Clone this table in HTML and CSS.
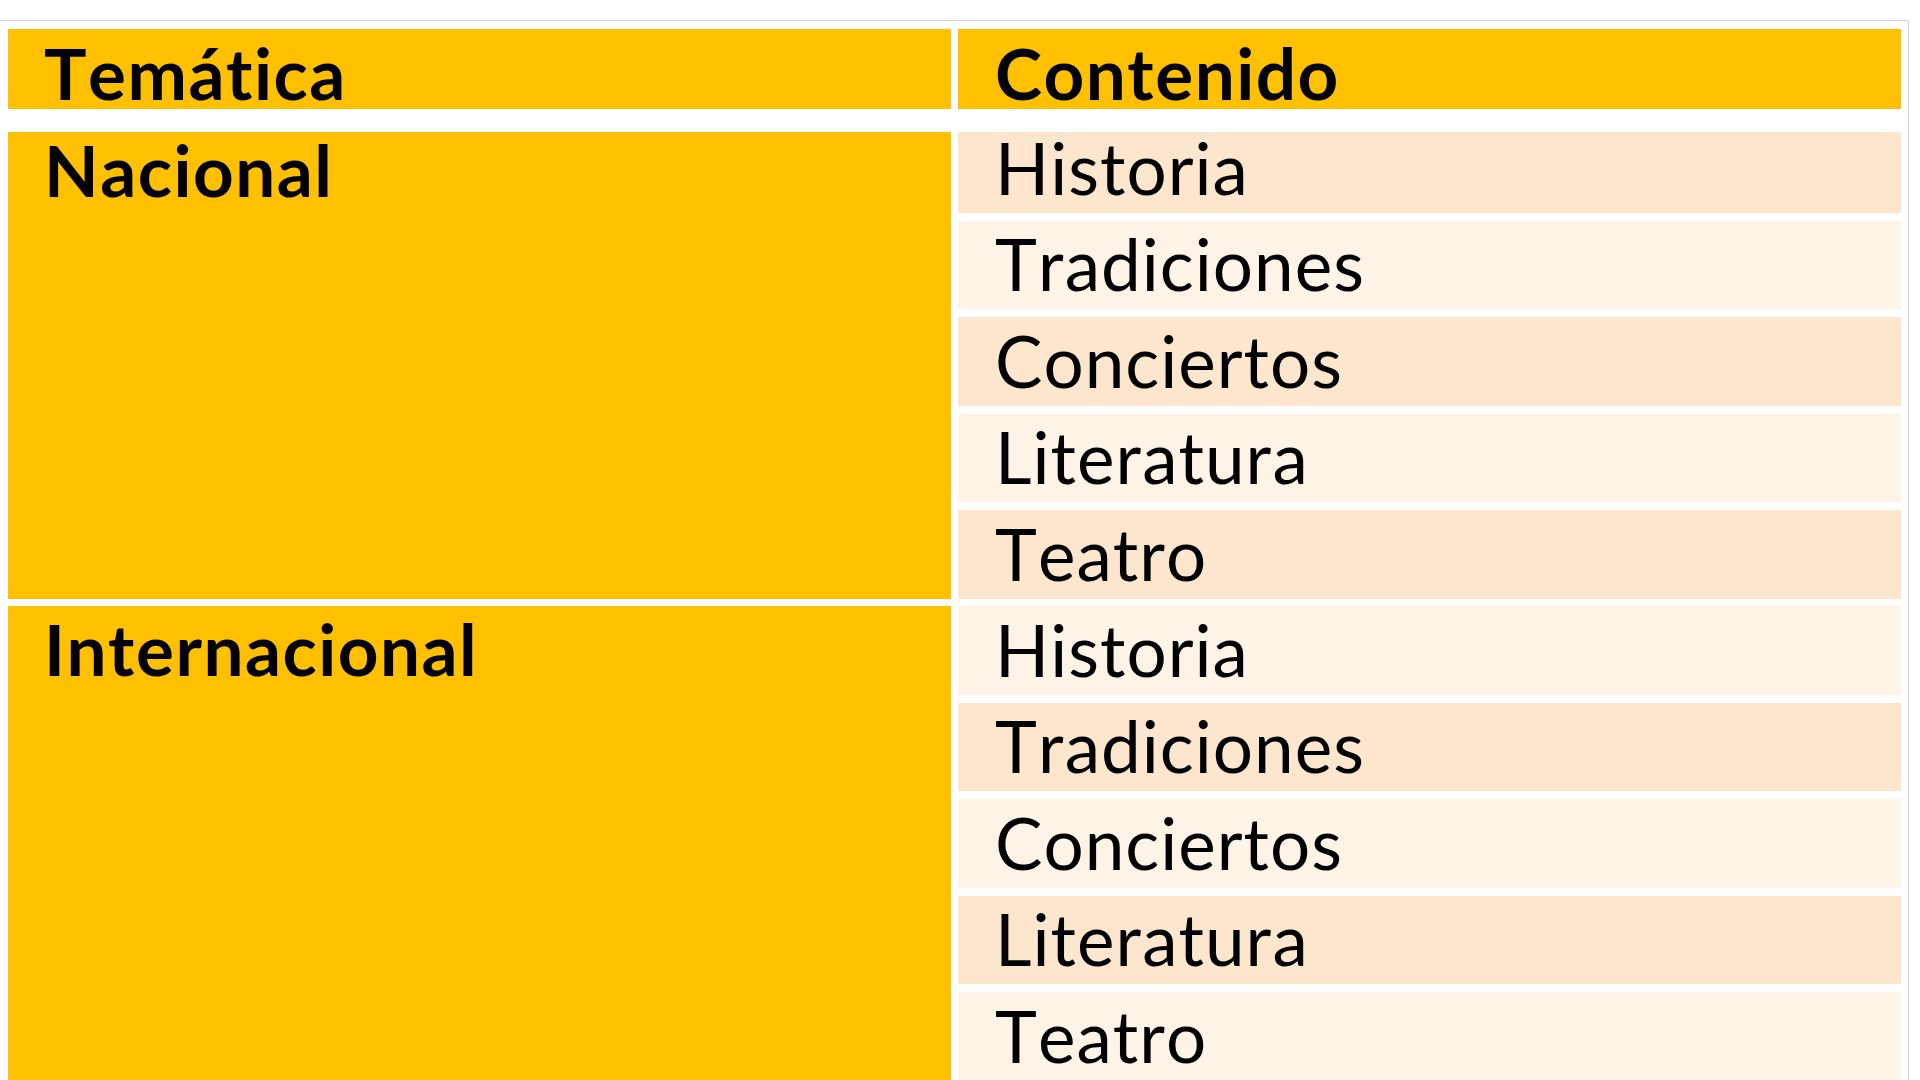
FILE: index.html
```html
<!DOCTYPE html>
<html lang="es">
<head>
<meta charset="utf-8">
<title>Temática / Contenido</title>
<link rel="stylesheet" href="styles.css">
</head>
<body>
<div class="frame">
  <div class="thead">
    <div class="cell head">Temática</div>
    <div class="cell head">Contenido</div>
  </div>
  <div class="tbody">
    <div class="cell cat cat-first">Nacional</div>
    <div class="cell item dark">Historia</div>
    <div class="cell item light">Tradiciones</div>
    <div class="cell item dark">Conciertos</div>
    <div class="cell item light">Literatura</div>
    <div class="cell item dark">Teatro</div>
    <div class="cell cat cat-second">Internacional</div>
    <div class="cell item light">Historia</div>
    <div class="cell item dark">Tradiciones</div>
    <div class="cell item light">Conciertos</div>
    <div class="cell item dark">Literatura</div>
    <div class="cell item light">Teatro</div>
  </div>
</div>
</body>
</html>
```
FILE: styles.css
```css
html, body {
  margin: 0;
  padding: 0;
  background: #ffffff;
  overflow: hidden;
}

body {
  font-family: "Lato", "Open Sans", sans-serif;
  color: #000000;
}

.frame {
  box-sizing: border-box;
  width: 1909px;
  margin-top: 20px;
  border-top: 1px solid #d2d2d2;
  border-right: 1px solid #d2d2d2;
  padding: 8px 7px 0 8px;
  height: 1060px;
}

.thead,
.tbody {
  display: grid;
  grid-template-columns: 943px 943px;
  column-gap: 7px;
}

.thead {
  grid-template-rows: 80px;
  margin-bottom: 23px;
}

.tbody {
  grid-template-rows: 81px repeat(9, 88.5px);
  row-gap: 7.9px;
}

.cell {
  box-sizing: border-box;
  font-size: 71px;
  line-height: 70px;
  letter-spacing: 1px;
  white-space: nowrap;
  font-kerning: none;
  font-variant-ligatures: none;
  font-feature-settings: "liga" 0, "clig" 0, "kern" 0;
}

.head {
  background: #ffc000;
  font-weight: 700;
  letter-spacing: 1.5px;
  padding: 9px 0 0 36px;
}

.head + .head {
  padding-left: 37px;
}

.cat {
  grid-column: 1;
  grid-row: span 5;
  background: #ffc000;
  font-weight: 700;
  letter-spacing: 1.5px;
  padding-left: 36px;
}

.cat-first {
  padding-top: 3px;
}

.cat-second {
  padding-top: 8px;
}

.item {
  grid-column: 2;
  display: flex;
  align-items: flex-end;
  padding: 0 0 10px 37px;
}

.dark {
  background: #fce6cd;
}

.light {
  background: #fef3e7;
}
```
